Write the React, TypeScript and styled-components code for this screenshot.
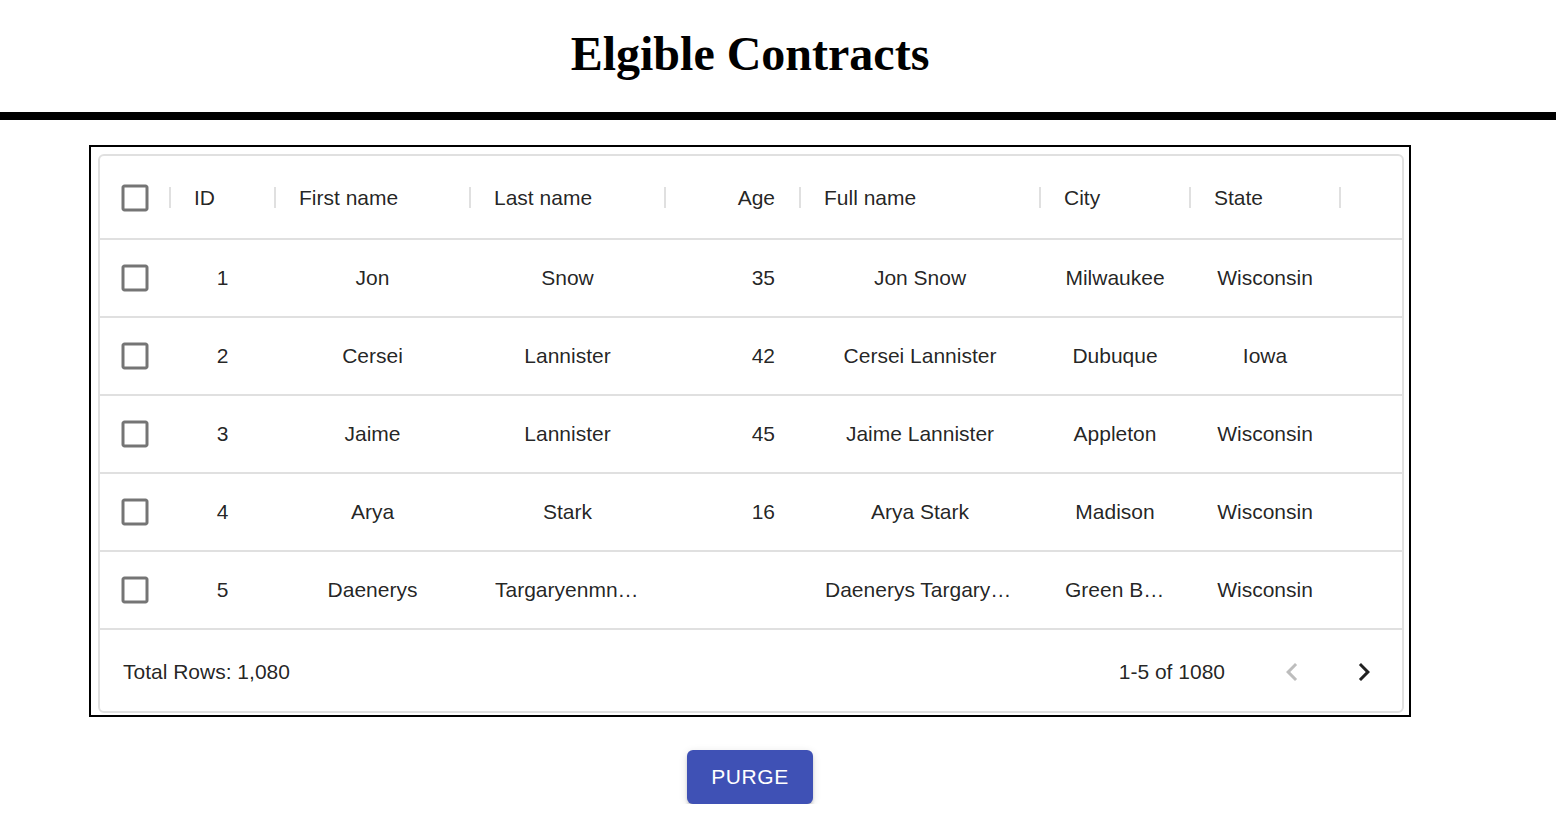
import React from 'react'
import styled, { createGlobalStyle } from 'styled-components'

const GlobalStyle = createGlobalStyle`
  html, body {
    margin: 0;
    padding: 0;
    background: #ffffff;
  }
  body {
    font-family: "Liberation Sans", Arial, sans-serif;
  }
`

type Align = 'left' | 'center' | 'right'

type Row = {
  id: number
  firstName: string
  lastName: string
  age: number | null
  fullName: string
  city: string
  state: string
}

const rows: Row[] = [
  { id: 1, firstName: 'Jon', lastName: 'Snow', age: 35, fullName: 'Jon Snow', city: 'Milwaukee', state: 'Wisconsin' },
  { id: 2, firstName: 'Cersei', lastName: 'Lannister', age: 42, fullName: 'Cersei Lannister', city: 'Dubuque', state: 'Iowa' },
  { id: 3, firstName: 'Jaime', lastName: 'Lannister', age: 45, fullName: 'Jaime Lannister', city: 'Appleton', state: 'Wisconsin' },
  { id: 4, firstName: 'Arya', lastName: 'Stark', age: 16, fullName: 'Arya Stark', city: 'Madison', state: 'Wisconsin' },
  {
    id: 5,
    firstName: 'Daenerys',
    lastName: 'Targaryenmnnnnnnnnnn',
    age: null,
    fullName: 'Daenerys Targaryenmnnnnnnnnnn',
    city: 'Green Bay',
    state: 'Wisconsin'
  }
]

type Column = { field: keyof Row; header: string; headerAlign: Align; align: Align }

const columns: Column[] = [
  { field: 'id', header: 'ID', headerAlign: 'left', align: 'center' },
  { field: 'firstName', header: 'First name', headerAlign: 'left', align: 'center' },
  { field: 'lastName', header: 'Last name', headerAlign: 'left', align: 'center' },
  { field: 'age', header: 'Age', headerAlign: 'right', align: 'right' },
  { field: 'fullName', header: 'Full name', headerAlign: 'left', align: 'center' },
  { field: 'city', header: 'City', headerAlign: 'left', align: 'center' },
  { field: 'state', header: 'State', headerAlign: 'left', align: 'center' }
]

const GRID_COLUMNS = '71px 105px 195px 195px 135px 240px 150px 150px 1fr'

const Header = styled.header`
  width: 1500px;
  text-align: center;
`

const Title = styled.h1`
  margin: 26px 0 31px;
  font-family: "Liberation Serif", "Times New Roman", serif;
  font-size: 48px;
  font-weight: 700;
  line-height: 55px;
  color: #000;
`

const Rule = styled.div`
  height: 8px;
  background: #000;
`

const Main = styled.main`
  width: 1500px;
  display: flex;
  flex-direction: column;
  align-items: center;
  padding-top: 25px;
`

const Frame = styled.section`
  width: 1322px;
  box-sizing: border-box;
  border: 2px solid #000;
  padding: 7px 4px 2px 7px;
`

const Grid = styled.div`
  width: 1306px;
  box-sizing: border-box;
  border: 2px solid #e0e0e0;
  border-radius: 6px;
  color: rgba(0, 0, 0, 0.87);
  font-size: 21px;
`

const GridRow = styled.div<{ $height: number }>`
  display: grid;
  grid-template-columns: ${GRID_COLUMNS};
  height: ${({ $height }) => $height}px;
  box-sizing: border-box;
  border-bottom: 2px solid #e0e0e0;
`

const HeaderCell = styled.div`
  display: flex;
  align-items: center;
  min-width: 0;
  padding-top: 1px;
`

const HeaderLabel = styled.div<{ $align: Align }>`
  flex: 1;
  min-width: 0;
  display: flex;
  align-items: center;
  justify-content: ${({ $align }) =>
    $align === 'right' ? 'flex-end' : $align === 'center' ? 'center' : 'flex-start'};
  padding: 0 24px 0 23px;
  white-space: nowrap;
  overflow: hidden;
`

const Separator = styled.span`
  flex: none;
  width: 2px;
  height: 21px;
  background: #e0e0e0;
`

const Cell = styled.div<{ $align: Align }>`
  display: flex;
  align-items: center;
  min-width: 0;
  padding: 0 26px 0 24px;
  span {
    flex: 1;
    min-width: 0;
    text-align: ${({ $align }) => $align};
    white-space: nowrap;
    overflow: hidden;
    text-overflow: ellipsis;
  }
`

const CheckCell = styled.div<{ $inHeader?: boolean }>`
  flex: 1;
  display: flex;
  align-items: center;
  justify-content: center;
  padding-right: ${({ $inHeader }) => ($inHeader ? '0' : '2px')};
`

const CheckSvg = styled.svg`
  flex: none;
  display: block;
`

const Footer = styled.div`
  display: flex;
  align-items: center;
  height: 81px;
  padding: 2px 8px 0 23px;
  box-sizing: border-box;
`

const TotalRows = styled.div`
  flex: 1;
`

const PageInfo = styled.div`
  margin-right: 37px;
`

const PageButtons = styled.div`
  display: flex;
  gap: 12px;
`

const PageButton = styled.button<{ $disabled?: boolean }>`
  width: 60px;
  height: 60px;
  padding: 0;
  border: none;
  background: transparent;
  border-radius: 50%;
  display: flex;
  align-items: center;
  justify-content: center;
  color: ${({ $disabled }) => ($disabled ? 'rgba(0, 0, 0, 0.26)' : 'rgba(0, 0, 0, 0.87)')};
  cursor: ${({ $disabled }) => ($disabled ? 'default' : 'pointer')};
`

const PurgeButton = styled.button`
  margin-top: 33px;
  height: 54px;
  padding: 0 24px;
  border: none;
  border-radius: 6px;
  background: #3f51b5;
  color: #fff;
  font-family: "Liberation Sans", Arial, sans-serif;
  font-size: 21px;
  letter-spacing: 0.6px;
  text-transform: uppercase;
  box-shadow: 0 4px 2px -3px rgba(0, 0, 0, 0.2), 0 3px 3px 0 rgba(0, 0, 0, 0.14), 0 2px 8px 0 rgba(0, 0, 0, 0.12);
  cursor: pointer;
`

function CheckboxIcon() {
  return (
    <CheckSvg width="36" height="36" viewBox="0 0 24 24" fill="rgba(0,0,0,0.54)">
      <path d="M19 5v14H5V5h14m0-2H5c-1.1 0-2 .9-2 2v14c0 1.1.9 2 2 2h14c1.1 0 2-.9 2-2V5c0-1.1-.9-2-2-2z" />
    </CheckSvg>
  )
}

function ChevronLeft() {
  return (
    <svg width="36" height="36" viewBox="0 0 24 24" fill="currentColor">
      <path d="M15.41 16.59 10.83 12l4.58-4.59L14 6l-6 6 6 6 1.41-1.41z" />
    </svg>
  )
}

function ChevronRight() {
  return (
    <svg width="36" height="36" viewBox="0 0 24 24" fill="currentColor">
      <path d="M8.59 16.59 13.17 12 8.59 7.41 10 6l6 6-6 6-1.41-1.41z" />
    </svg>
  )
}

function ContractsGrid() {
  return (
    <Grid>
      <GridRow $height={84}>
        <HeaderCell>
          <CheckCell $inHeader>
            <CheckboxIcon />
          </CheckCell>
          <Separator />
        </HeaderCell>
        {columns.map((col) => (
          <HeaderCell key={col.field}>
            <HeaderLabel $align={col.headerAlign}>{col.header}</HeaderLabel>
            <Separator />
          </HeaderCell>
        ))}
        <HeaderCell />
      </GridRow>

      {rows.map((row) => (
        <GridRow key={row.id} $height={78}>
          <CheckCell>
            <CheckboxIcon />
          </CheckCell>
          {columns.map((col) => (
            <Cell key={col.field} $align={col.align}>
              <span>{row[col.field] ?? ''}</span>
            </Cell>
          ))}
          <div />
        </GridRow>
      ))}

      <Footer>
        <TotalRows>Total Rows: 1,080</TotalRows>
        <PageInfo>1-5 of 1080</PageInfo>
        <PageButtons>
          <PageButton $disabled aria-label="Go to previous page">
            <ChevronLeft />
          </PageButton>
          <PageButton aria-label="Go to next page">
            <ChevronRight />
          </PageButton>
        </PageButtons>
      </Footer>
    </Grid>
  )
}

export default function App() {
  return (
    <>
      <GlobalStyle />
      <Header>
        <Title>Elgible Contracts</Title>
      </Header>
      <Rule />
      <Main>
        <Frame>
          <ContractsGrid />
        </Frame>
        <PurgeButton>Purge</PurgeButton>
      </Main>
    </>
  )
}
